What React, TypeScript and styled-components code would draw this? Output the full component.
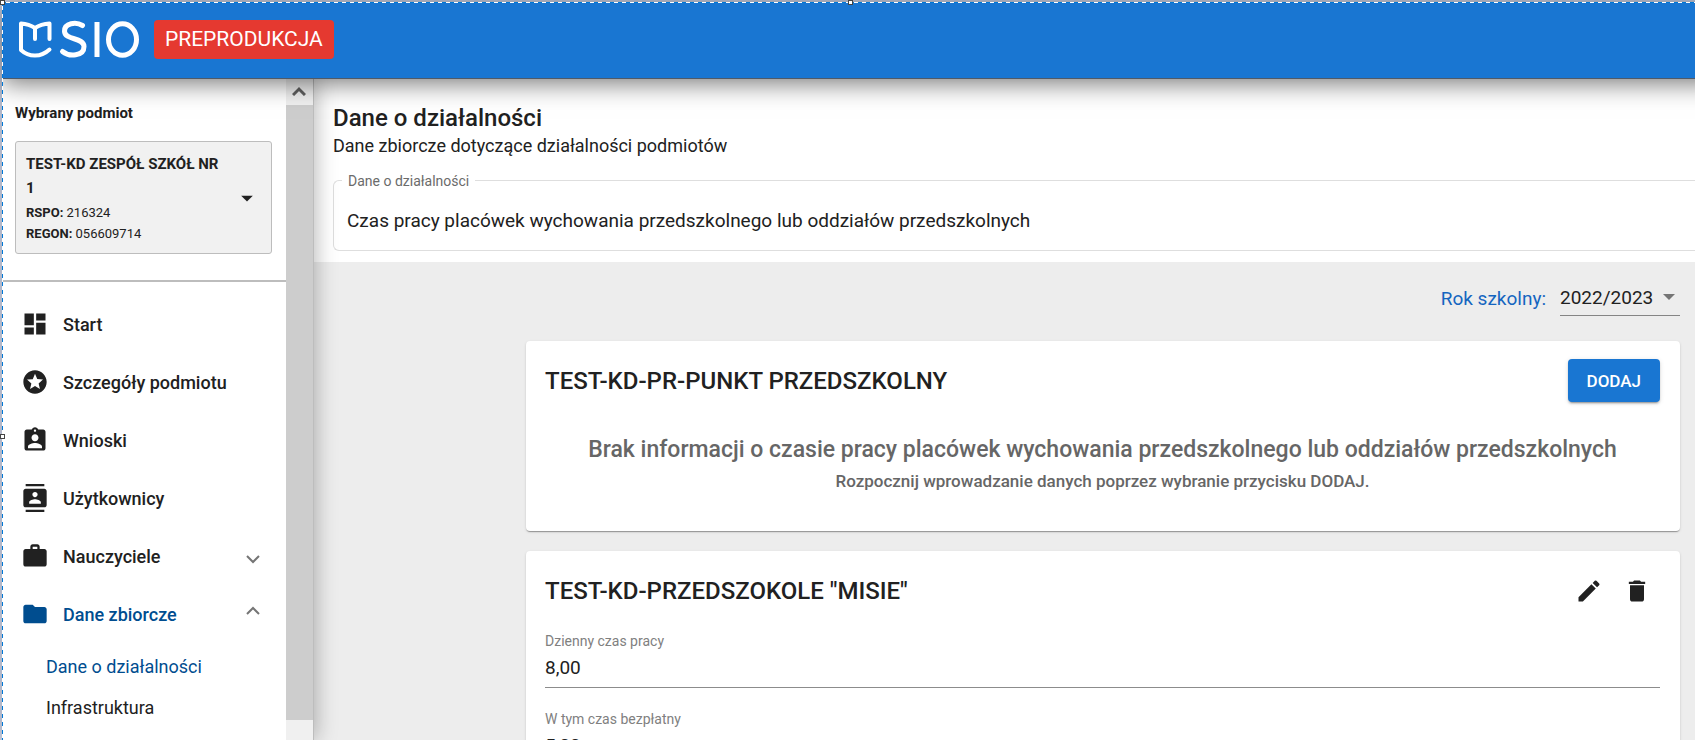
import React, { useState } from "react";
import styled, { createGlobalStyle } from "styled-components";
import {
  MdDashboard,
  MdStars,
  MdAssignmentInd,
  MdContacts,
  MdWork,
  MdFolder,
  MdEdit,
  MdDelete,
  MdArrowDropDown,
} from "react-icons/md";

const GlobalStyle = createGlobalStyle`
  *, *::before, *::after { box-sizing: border-box; }
  html, body, #root { height: 100%; }
  body {
    margin: 0;
    overflow: hidden;
    background: #ededed;
    color: #212121;
    font-family: Roboto, "Liberation Sans", sans-serif;
  }
  h1, h2, p, ul { margin: 0; padding: 0; }
  ul { list-style: none; }
  button, input, select { font: inherit; color: inherit; }
  a { color: inherit; text-decoration: none; }
`;

const Frame = styled.div`
  position: relative;
  display: flex;
  flex-direction: column;
  height: 100vh;
  padding: 2px 0 0 2px;
  background: #c8cfe2;
  overflow: hidden;
`;

const SelectionOverlay = styled.svg`
  position: absolute;
  inset: 0;
  width: 100%;
  height: 100%;
  z-index: 5;
  pointer-events: none;
`;

const TopBar = styled.header`
  position: relative;
  z-index: 3;
  flex: none;
  display: flex;
  align-items: center;
  gap: 14px;
  height: 77px;
  margin-right: -24px;
  padding: 0 16px 2px;
  background: #1976d2;
  border-bottom: 1px solid #4f5a68;
  box-shadow: 0 4px 24px rgba(0, 0, 0, 0.55);
`;

const Logo = styled.svg`
  display: block;
  width: 122px;
  height: 40px;
`;

const EnvBadge = styled.span`
  padding: 0 11px;
  border-radius: 4px;
  background: #e53930;
  color: #fff;
  font-size: 21px;
  line-height: 39px;
`;

const Body = styled.div`
  flex: 1;
  display: flex;
  min-height: 0;
`;

const Sidebar = styled.aside`
  position: relative;
  z-index: 2;
  flex: none;
  display: flex;
  width: 312px;
  background: #fff;
  border-right: 1px solid #bdbdbd;
  box-shadow: 2px 0 20px rgba(0, 0, 0, 0.28);
`;

const SidebarContent = styled.div`
  flex: 1;
  min-width: 0;
  overflow: hidden;
`;

const ScrollTrack = styled.div`
  flex: none;
  display: flex;
  flex-direction: column;
  width: 27px;
  background: #f0f0f0;
`;

const ScrollArrow = styled.button`
  display: grid;
  place-items: center;
  width: 26px;
  height: 26px;
  padding: 0 0 2px;
  border: 0;
  background: transparent;
`;

const ScrollThumb = styled.div`
  flex: none;
  height: 615px;
  background: #cdcdcd;
`;

const EntitySection = styled.section`
  padding: 24px 14px 26px 13px;
  border-bottom: 2px solid #bdbdbd;
`;

const EntityHeading = styled.h2`
  font-size: 15px;
  line-height: 20px;
  font-weight: 700;
  margin-bottom: 18px;
`;

const EntityButton = styled.button`
  display: flex;
  align-items: center;
  justify-content: space-between;
  width: 100%;
  padding: 10px 10px 9px;
  border: 1px solid #bdbdbd;
  border-radius: 3px;
  background: #f1f1f1;
  text-align: left;
`;

const EntityText = styled.span`
  display: block;
  width: 200px;
  font-size: 13px;
  line-height: 21px;
`;

const EntityName = styled.strong`
  display: block;
  margin-bottom: 2px;
  font-size: 15px;
  line-height: 24px;
`;

const EntityLine = styled.span`
  display: block;
`;

const Menu = styled.ul`
  padding-top: 13px;
`;

const MenuLink = styled.a<{ $active?: boolean }>`
  display: flex;
  align-items: center;
  height: 58px;
  padding: 0 20px 0 19px;
  color: ${(p) => (p.$active ? "#004d8f" : "#212121")};
  font-size: 18px;
  font-weight: 500;
`;

const MenuIcon = styled.span`
  display: grid;
  place-items: center;
  width: 28px;
  height: 28px;
  margin-right: 14px;
`;

const MenuLabel = styled.span`
  flex: 1;
`;

const Chevron = styled.svg<{ $open: boolean }>`
  width: 26px;
  height: 26px;
  fill: none;
  stroke: #757575;
  stroke-width: 2;
  transform: ${(p) => (p.$open ? "rotate(180deg)" : "none")};
`;

const SubMenu = styled.ul`
  padding-top: 3px;
`;

const SubLink = styled.a<{ $active?: boolean }>`
  display: block;
  padding-left: 44px;
  color: ${(p) => (p.$active ? "#004d8f" : "#212121")};
  font-size: 18px;
  line-height: 41px;
`;

const Main = styled.main`
  flex: 1;
  min-width: 0;
  background: #ededed;
  overflow: hidden;
`;

const PageHead = styled.section`
  padding: 24px 0 11px 19px;
  background: #fff;
`;

const PageTitle = styled.h1`
  font-size: 24px;
  line-height: 30px;
  font-weight: 500;
`;

const PageSubtitle = styled.p`
  font-size: 18px;
  line-height: 26px;
`;

const OutlinedField = styled.fieldset`
  margin: 12px 0 0;
  padding: 0 13px;
  border: 1px solid #dedede;
  border-right: 0;
  border-radius: 6px 0 0 6px;
`;

const OutlinedLegend = styled.legend`
  margin-left: -5px;
  padding: 2px 6px 0;
  color: #6b6b6b;
  font-size: 14px;
  line-height: 16px;
`;

const OutlinedInput = styled.input`
  display: block;
  width: 100%;
  height: 61px;
  padding: 1px 0 0;
  border: 0;
  outline: 0;
  background: transparent;
  font-size: 19px;
`;

const Content = styled.div`
  padding: 19px 15px 0 212px;
`;

const YearRow = styled.div`
  display: flex;
  align-items: center;
  justify-content: flex-end;
  gap: 14px;
  margin-bottom: 25px;
  font-size: 19px;
`;

const YearLabel = styled.label`
  color: #1565c0;
`;

const SelectWrap = styled.span`
  position: relative;
  width: 120px;
  border-bottom: 1px solid #858585;
`;

const YearSelect = styled.select`
  display: block;
  width: 100%;
  height: 34px;
  padding: 0 0 2px;
  border: 0;
  outline: 0;
  appearance: none;
  background: transparent;
`;

const SelectArrow = styled.svg`
  position: absolute;
  right: 5px;
  top: 13px;
  width: 12px;
  height: 6px;
  fill: #757575;
  pointer-events: none;
`;

const Card = styled.section`
  margin-bottom: 20px;
  padding: 18px 20px 34px 19px;
  border-radius: 4px;
  background: #fff;
  box-shadow: 0 2px 1px -1px rgba(0, 0, 0, 0.2), 0 1px 1px rgba(0, 0, 0, 0.14),
    0 1px 3px rgba(0, 0, 0, 0.12);
`;

const CardHead = styled.div`
  display: flex;
  align-items: center;
  justify-content: space-between;
  height: 43px;
`;

const CardTitle = styled.h2`
  font-size: 24px;
  line-height: 32px;
  font-weight: 500;
`;

const AddButton = styled.button`
  height: 43px;
  padding: 0 19px;
  border: 0;
  border-radius: 4px;
  background: #1976d2;
  color: #fff;
  font-size: 17px;
  font-weight: 500;
  box-shadow: 0 3px 1px -2px rgba(0, 0, 0, 0.2), 0 2px 2px rgba(0, 0, 0, 0.14),
    0 1px 5px rgba(0, 0, 0, 0.12);
`;

const EmptyState = styled.div`
  padding-top: 32px;
  color: #666;
  font-weight: 500;
  text-align: center;
`;

const EmptyTitle = styled.p`
  font-size: 23px;
  line-height: 32px;
`;

const EmptyHint = styled.p`
  font-size: 17px;
  line-height: 31px;
`;

const CardActions = styled.div`
  display: flex;
  padding-right: 9px;
  gap: 20px;
`;

const IconButton = styled.button`
  display: grid;
  place-items: center;
  width: 28px;
  height: 28px;
  padding: 0;
  border: 0;
  background: transparent;
`;

const FieldList = styled.div`
  display: grid;
  gap: 21px;
  margin-top: 19px;
`;

const Field = styled.div`
  border-bottom: 1px solid #8c8c8c;
`;

const FieldLabel = styled.label`
  display: block;
  color: #808080;
  font-size: 14px;
  line-height: 20px;
`;

const FieldInput = styled.input`
  display: block;
  width: 100%;
  height: 36px;
  padding: 0 0 4px;
  border: 0;
  outline: 0;
  background: transparent;
  font-size: 19px;
`;

const menuItems = [
  { label: "Start", icon: MdDashboard },
  { label: "Szczegóły podmiotu", icon: MdStars },
  { label: "Wnioski", icon: MdAssignmentInd },
  { label: "Użytkownicy", icon: MdContacts },
  { label: "Nauczyciele", icon: MdWork, expandable: true },
  { label: "Dane zbiorcze", icon: MdFolder, expandable: true, active: true },
];

const subItems = [
  { label: "Dane o działalności", active: true },
  { label: "Infrastruktura", active: false },
];

function SioLogo() {
  return (
    <Logo viewBox="0 -1 122 40" role="img" aria-label="SIO" fill="none" stroke="#fff">
      <g strokeWidth="4" strokeLinecap="round" strokeLinejoin="round">
        <path d="M31.5 19V3.5Q23 4 17 8Q11 4 3 3.5V30C11 37.5 23 37.5 31.5 29.5" />
        <path d="M17 8V19" />
      </g>
      <g strokeWidth="5">
        <path
          d="M64.5 5.5C58 1.5 46.5 3 46.5 11.2C46.5 20.5 66 17 66 26.5C66 36.5 51 37 44.5 31.5"
          strokeLinecap="round"
        />
        <path d="M79 2V37" />
        <ellipse cx="104.5" cy="19.5" rx="14" ry="15.8" />
      </g>
    </Logo>
  );
}

function SelectionMarks() {
  return (
    <SelectionOverlay aria-hidden="true">
      <g stroke="#fff" strokeWidth="1">
        <line x1="2" y1="2.5" x2="100%" y2="2.5" />
        <line x1="2.5" y1="2" x2="2.5" y2="100%" />
      </g>
      <g stroke="#0078d7" strokeWidth="1" strokeDasharray="4 4">
        <line x1="2" y1="2.5" x2="100%" y2="2.5" />
        <line x1="2.5" y1="2" x2="2.5" y2="100%" />
      </g>
      <g fill="#fff" stroke="#444">
        <rect x="0.5" y="0.5" width="4" height="4" />
        <rect x="848.5" y="0.5" width="4" height="4" />
        <rect x="0.5" y="434.5" width="4" height="4" />
      </g>
    </SelectionOverlay>
  );
}

export default function App() {
  const [daily, setDaily] = useState("8,00");
  const [free, setFree] = useState("5,00");
  const [kind, setKind] = useState(
    "Czas pracy placówek wychowania przedszkolnego lub oddziałów przedszkolnych"
  );

  return (
    <Frame>
      <GlobalStyle />
      <TopBar>
        <SioLogo />
        <EnvBadge>PREPRODUKCJA</EnvBadge>
      </TopBar>
      <Body>
        <Sidebar>
          <SidebarContent>
            <EntitySection>
              <EntityHeading>Wybrany podmiot</EntityHeading>
              <EntityButton type="button">
                <EntityText>
                  <EntityName>TEST-KD ZESPÓŁ SZKÓŁ NR 1</EntityName>
                  <EntityLine><b>RSPO:</b> 216324</EntityLine>
                  <EntityLine><b>REGON:</b> 056609714</EntityLine>
                </EntityText>
                <MdArrowDropDown size={28} />
              </EntityButton>
            </EntitySection>
            <nav>
              <Menu>
                {menuItems.map(({ label, icon: Icon, expandable, active }) => (
                  <li key={label}>
                    <MenuLink href="#" $active={active}>
                      <MenuIcon><Icon size={28} /></MenuIcon>
                      <MenuLabel>{label}</MenuLabel>
                      {expandable && (
                        <Chevron $open={Boolean(active)} viewBox="0 0 26 26" aria-hidden="true">
                          <path d="M7 13L13 19L19 13" />
                        </Chevron>
                      )}
                    </MenuLink>
                  </li>
                ))}
              </Menu>
              <SubMenu>
                {subItems.map(({ label, active }) => (
                  <li key={label}>
                    <SubLink href="#" $active={active}>{label}</SubLink>
                  </li>
                ))}
              </SubMenu>
            </nav>
          </SidebarContent>
          <ScrollTrack>
            <ScrollArrow type="button" aria-label="Przewiń w górę">
              <svg width="14" height="10" viewBox="0 0 14 10" fill="none" stroke="#606060" strokeWidth="3">
                <path d="M1 9L7 3L13 9" />
              </svg>
            </ScrollArrow>
            <ScrollThumb />
          </ScrollTrack>
        </Sidebar>
        <Main>
          <PageHead>
            <PageTitle>Dane o działalności</PageTitle>
            <PageSubtitle>Dane zbiorcze dotyczące działalności podmiotów</PageSubtitle>
            <OutlinedField>
              <OutlinedLegend>Dane o działalności</OutlinedLegend>
              <OutlinedInput
                aria-label="Dane o działalności"
                value={kind}
                onChange={(e) => setKind(e.target.value)}
              />
            </OutlinedField>
          </PageHead>
          <Content>
            <YearRow>
              <YearLabel htmlFor="year">Rok szkolny:</YearLabel>
              <SelectWrap>
                <YearSelect id="year" defaultValue="2022/2023">
                  <option>2022/2023</option>
                </YearSelect>
                <SelectArrow viewBox="0 0 12 6"><path d="M0 0H12L6 6Z" /></SelectArrow>
              </SelectWrap>
            </YearRow>
            <Card>
              <CardHead>
                <CardTitle>TEST-KD-PR-PUNKT PRZEDSZKOLNY</CardTitle>
                <AddButton type="button">DODAJ</AddButton>
              </CardHead>
              <EmptyState>
                <EmptyTitle>
                  Brak informacji o czasie pracy placówek wychowania przedszkolnego lub oddziałów przedszkolnych
                </EmptyTitle>
                <EmptyHint>Rozpocznij wprowadzanie danych poprzez wybranie przycisku DODAJ.</EmptyHint>
              </EmptyState>
            </Card>
            <Card>
              <CardHead>
                <CardTitle>TEST-KD-PRZEDSZOKOLE "MISIE"</CardTitle>
                <CardActions>
                  <IconButton type="button" aria-label="Edytuj"><MdEdit size={28} /></IconButton>
                  <IconButton type="button" aria-label="Usuń"><MdDelete size={28} /></IconButton>
                </CardActions>
              </CardHead>
              <FieldList>
                <Field>
                  <FieldLabel htmlFor="daily">Dzienny czas pracy</FieldLabel>
                  <FieldInput id="daily" value={daily} onChange={(e) => setDaily(e.target.value)} />
                </Field>
                <Field>
                  <FieldLabel htmlFor="free">W tym czas bezpłatny</FieldLabel>
                  <FieldInput id="free" value={free} onChange={(e) => setFree(e.target.value)} />
                </Field>
              </FieldList>
            </Card>
          </Content>
        </Main>
      </Body>
      <SelectionMarks />
    </Frame>
  );
}
